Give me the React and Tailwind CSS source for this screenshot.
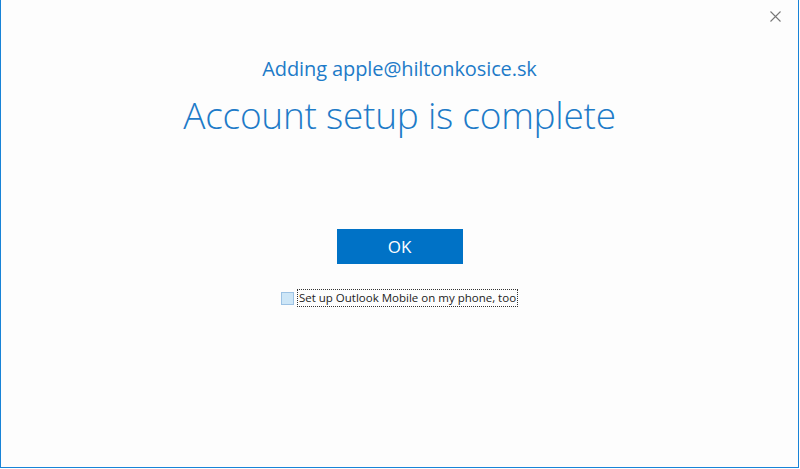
import React from "react";

const App = () => {
  return (
    <div className="w-[800px] h-[469px] bg-white">
      <div className="relative w-[799px] h-[468px] border-x border-b border-[#1883d7] bg-[#fdfdfd] flex flex-col items-center" style={{ fontFamily: '"Open Sans", "Noto Sans", sans-serif' }}>
        <button className="absolute right-[15px] top-[8px] w-[16px] h-[16px] flex items-center justify-center">
          <svg width="11" height="11" viewBox="0 0 11 11">
            <path d="M0.5 0.5 L10.5 10.5 M10.5 0.5 L0.5 10.5" stroke="#777" strokeWidth="1.1" />
          </svg>
        </button>

        <div className="mt-[54px] text-[20px] leading-[30px] text-[#1e7bc8] tracking-[-0.1px]">
          Adding apple@hiltonkosice.sk
        </div>
        <div className="mt-[6px] text-[37px] leading-[50px] font-light text-[#1e7bc8] tracking-[-0.25px]">
          Account setup is complete
        </div>

        <button className="mt-[89px] w-[126px] h-[35px] bg-[#0072c6] text-white text-[17px] flex items-center justify-center">
          OK
        </button>

        <div className="mt-[25px] flex items-center">
          <span className="w-[13px] h-[13px] bg-[#cde6f7] border border-[#9cc2e4]" />
          <span className="ml-[3px] px-[1px] text-[11.5px] leading-[16px] text-[#222] border border-dotted border-[#333]">
            Set up Outlook Mobile on my phone, too
          </span>
        </div>
      </div>
    </div>
  );
};

export default App;
